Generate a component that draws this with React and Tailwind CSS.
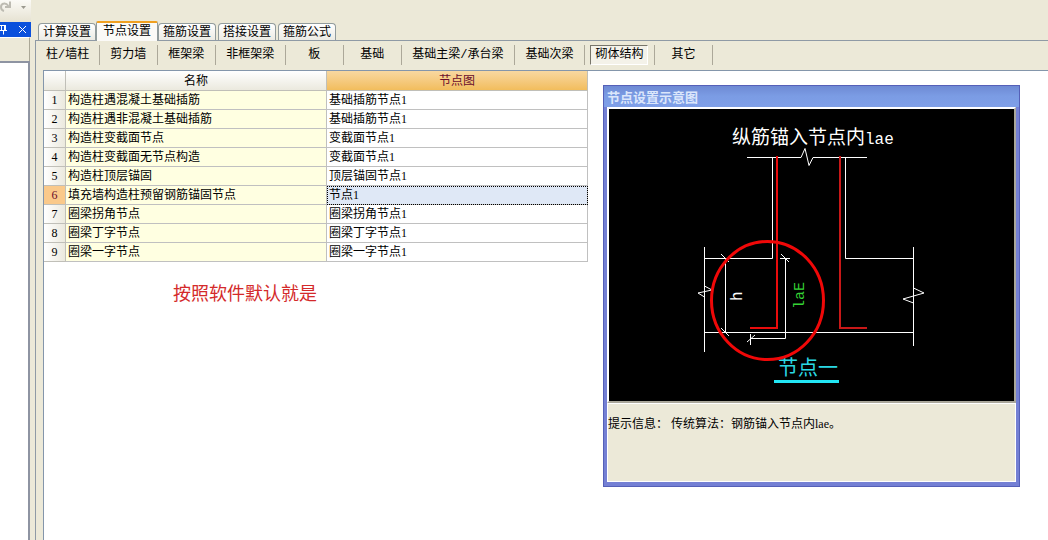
import { useState } from "react";

const tabs = ["计算设置", "节点设置", "箍筋设置", "搭接设置", "箍筋公式"];

const categories = [
  "柱/墙柱",
  "剪力墙",
  "框架梁",
  "非框架梁",
  "板",
  "基础",
  "基础主梁/承台梁",
  "基础次梁",
  "砌体结构",
  "其它",
];

const rows = [
  { name: "构造柱遇混凝土基础插筋", node: "基础插筋节点1" },
  { name: "构造柱遇非混凝土基础插筋", node: "基础插筋节点1" },
  { name: "构造柱变截面节点", node: "变截面节点1" },
  { name: "构造柱变截面无节点构造", node: "变截面节点1" },
  { name: "构造柱顶层锚固", node: "顶层锚固节点1" },
  { name: "填充墙构造柱预留钢筋锚固节点", node: "节点1" },
  { name: "圈梁拐角节点", node: "圈梁拐角节点1" },
  { name: "圈梁丁字节点", node: "圈梁丁字节点1" },
  { name: "圈梁一字节点", node: "圈梁一字节点1" },
];

function SideDock() {
  return (
    <aside className="flex w-[31px] shrink-0 flex-col">
      <div className="flex h-[22px] items-start gap-[10px] bg-gradient-to-b from-[#fbfaf6] to-[#e6e2d2]">
        <svg width="11" height="13" viewBox="0 0 11 13" fill="none" stroke="#bdbbb2" strokeWidth="2">
          <path d="M4 11C0 10 0 4 4 3.5C6 3.2 7 4 8.5 6M10 1.5V7H5" />
        </svg>
        <svg className="mt-1.5" width="5" height="3" viewBox="0 0 5 3">
          <path d="M0 0h5L2.5 3z" fill="#9b998f" />
        </svg>
      </div>
      <div className="flex h-[15px] items-center justify-between bg-[#0a50dc] pr-1 text-white">
        <button aria-label="固定">
          <svg width="8" height="11" viewBox="0 0 8 11" stroke="currentColor" fill="none">
            <path d="M0 1.5h6M1.5 1.5v5M4.5 1.5v5M5.5 1.5v5M0 6.5h7M3.5 6.5v4" />
          </svg>
        </button>
        <button aria-label="关闭">
          <svg width="9" height="9" viewBox="0 0 9 9" stroke="currentColor" fill="none">
            <path d="M1 1l7 7M8 1L1 8" />
          </svg>
        </button>
      </div>
      <div className="mr-px h-[24px] border-t border-r border-[#aaa796] border-t-white bg-[#ece9d8]" />
      <div className="mr-px flex-1 border-t-2 border-r-2 border-[#8e94a2] bg-white" />
    </aside>
  );
}

function NodeDrawing() {
  return (
    <svg
      viewBox="609 109 405 292"
      className="block w-full bg-black font-['Liberation_Mono','Noto_Sans_CJK_SC',monospace]"
    >
      {/* concrete outline */}
      <g fill="none" stroke="#ffffff">
        <path d="M747 157.5H801L805 148.5L809 165.5L813 157.5H867" />
        <path d="M772.5 157V258.5H704M845.5 157V258.5H914" />
        <path d="M704 332.5H914" />
        <path d="M704.5 247V286L712 290L698 293L704.5 297V352M704.5 286V297" />
        <path d="M913.5 247V288L924 293L903 299L913.5 303V346M913.5 288V303" />
      </g>
      {/* dimensions */}
      <g fill="none" stroke="#ffffff">
        <path d="M725.5 258V332M721 254L729 262M721 328L729 336" />
        <path d="M780 258.5H790M781 254L789 262M785.5 258V338.5H750M750.5 334V345M747 342L755 335" />
      </g>
      {/* rebar */}
      <path d="M777 156V328H750" fill="none" stroke="#e80c0c" strokeWidth="2" />
      <path d="M840 156V328H867" fill="none" stroke="#c81818" strokeWidth="2" />
      <text x="732" y="144" fontSize="19" fill="#ffffff">
        纵筋锚入节点内<tspan fontSize="16">lae</tspan>
      </text>
      <text transform="translate(742 301) rotate(-90)" fontSize="16" fill="#ffffff">
        h
      </text>
      <text transform="translate(804 309) rotate(-90)" fontSize="15" fill="#35d335">
        laE
      </text>
      <text x="778" y="375" fontSize="20" fill="#2ad8e4">
        节点一
      </text>
      <path d="M774 381.5H839" stroke="#22e6f4" strokeWidth="3" />
      <ellipse cx="767.5" cy="300.5" rx="56" ry="59" fill="none" stroke="#f00808" strokeWidth="3" />
    </svg>
  );
}

function PreviewWindow() {
  return (
    <section className="absolute top-[14px] left-[559px] w-[417px] border-4 border-t-0 border-b-[5px] border-[#7480d4] bg-[#ece9d8] outline-1 -outline-offset-1 outline-[#5560b8]">
      <h2 className="-mx-1 flex h-[22px] items-center bg-gradient-to-b from-[#6d88d2] via-[#7b9ce4] to-[#7f9fe8] px-1 pt-1 text-[13px] font-bold text-[#dbe6fb]">
        节点设置示意图
      </h2>
      <div className="border-2 border-[#aaa79a] border-t-white border-l-white">
        <NodeDrawing />
      </div>
      <p className="min-h-[79px] border border-white pt-3 whitespace-pre">
        提示信息： 传统算法：钢筋锚入节点内lae。
      </p>
    </section>
  );
}

export default function App() {
  const [tab, setTab] = useState("节点设置");
  const [category, setCategory] = useState("砌体结构");
  const [selected, setSelected] = useState(5);

  return (
    <div className="flex min-h-screen bg-[#ece9d8] font-['Liberation_Serif','Noto_Sans_CJK_SC',serif] text-[12px] leading-4 text-black">
      <SideDock />
      <main className="ml-1 flex min-w-0 flex-1 flex-col pt-[21px]">
        <nav className="flex h-[19px] items-end gap-0.5 pl-[3px]">
          {tabs.map((t) => (
            <button
              key={t}
              onClick={() => setTab(t)}
              className={
                t === tab
                  ? "z-10 -mx-0.5 -mb-px h-[20px] rounded-t-xs border-x border-t-2 border-[#919b9c] border-t-[#f0a020] bg-[#fbfaf7] px-1.5 pb-0.5 whitespace-nowrap"
                  : "h-[17px] rounded-t-sm border border-b-0 border-[#919b9c] bg-gradient-to-b from-white to-[#ecebe4] px-1 whitespace-nowrap"
              }
            >
              {t}
            </button>
          ))}
        </nav>

        <div className="flex flex-1 flex-col border-t border-l border-[#8f9aa5]">
          <div className="flex h-[29px] items-start pt-1 font-['Liberation_Mono','Noto_Sans_CJK_SC',monospace]">
            {categories.map((c) => (
              <div
                key={c}
                className="flex h-5 min-w-[58px] shrink-0 items-center justify-center border-r border-[#aca899] pr-1.5 pl-[5px] first:pr-[5px]"
              >
                <button
                  onClick={() => setCategory(c)}
                  className={
                    c === category
                      ? "h-5 border border-white border-t-[#77756a] border-l-[#77756a] bg-[#f4f2e9] px-1 whitespace-nowrap"
                      : "h-5 border border-transparent px-1 whitespace-nowrap"
                  }
                >
                  {c}
                </button>
              </div>
            ))}
          </div>

          <div className="relative ml-[7px] flex-1 border-t border-l border-[#8496ab] bg-white">
            <table className="w-[544px] table-fixed border-separate border-spacing-0">
              <colgroup>
                <col className="w-[22px]" />
                <col className="w-[261px]" />
                <col className="w-[261px]" />
              </colgroup>
              <thead>
                <tr className="h-[20px]">
                  <th className="border-r border-b border-[#c0bfb8] bg-gradient-to-b from-white to-[#ebe9de] p-0" />
                  <th className="border-r border-b border-[#c0bfb8] bg-gradient-to-b from-white to-[#ebe9de] p-0 font-normal">
                    名称
                  </th>
                  <th className="border-r border-b border-[#c0bfb8] bg-gradient-to-b from-[#f8d8a0] to-[#f2bd5c] p-0 font-normal text-[#6a0d2c]">
                    节点图
                  </th>
                </tr>
              </thead>
              <tbody>
                {rows.map((row, i) => (
                  <tr key={row.name} className="h-[19px]" onClick={() => setSelected(i)}>
                    <th
                      className={
                        i === selected
                          ? "border-r border-b border-[#c0bfb8] bg-[#fac98a] p-0 font-normal text-[#6a0d2c]"
                          : "border-r border-b border-[#c0bfb8] bg-gradient-to-r from-white to-[#ebe9de] p-0 font-normal"
                      }
                    >
                      {i + 1}
                    </th>
                    <td className="border-r border-b border-[#c0c0c0] bg-[#ffffe1] p-0 pl-0.5">{row.name}</td>
                    <td
                      className={
                        i === selected
                          ? "border-r border-b border-[#c0c0c0] bg-[#dfe8f6] p-0 pl-0.5 outline-1 -outline-offset-1 outline-black outline-dotted"
                          : "border-r border-b border-[#c0c0c0] p-0 pl-0.5"
                      }
                    >
                      {row.node}
                    </td>
                  </tr>
                ))}
              </tbody>
            </table>
            <p className="mt-5 ml-[129px] text-[18px] leading-6 text-[#d42a2a]">按照软件默认就是</p>
            <PreviewWindow />
          </div>
        </div>
      </main>
    </div>
  );
}
